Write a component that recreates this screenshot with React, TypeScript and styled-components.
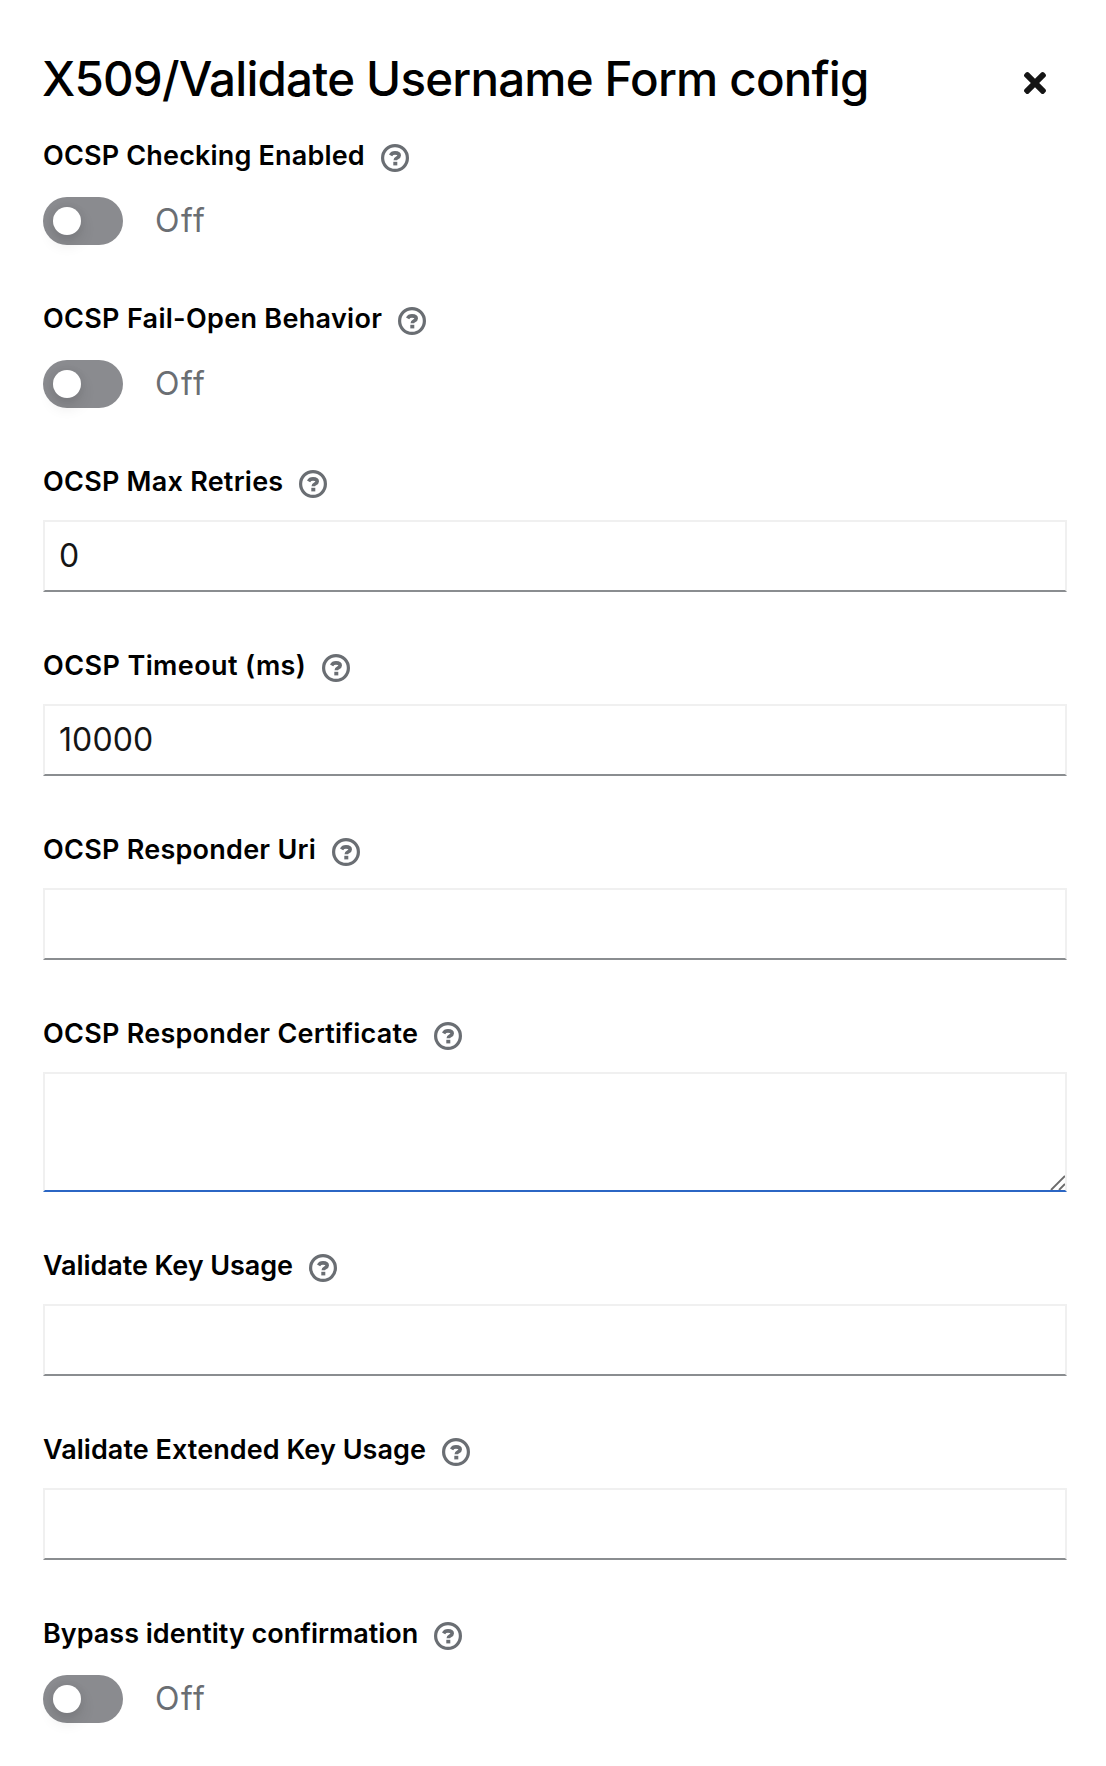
import React, { useState } from 'react';
import styled, { createGlobalStyle } from 'styled-components';
import { FaTimes } from 'react-icons/fa';

const GlobalStyle = createGlobalStyle`
  *, *::before, *::after { box-sizing: border-box; }
  body {
    margin: 0;
    background: #fff;
    color: #151515;
    font-family: Inter, "Liberation Sans", sans-serif;
  }
`;

const Modal = styled.main`
  width: 1106px;
  height: 1766px;
  overflow: hidden;
  padding: 48px 39px 0 43px;
`;

const Header = styled.header`
  display: flex;
  justify-content: space-between;
  align-items: center;
  height: 64px;
  margin-bottom: 26px;
  padding-right: 16px;
`;

const Title = styled.h1`
  margin: 0 0 2px -1px;
  color: #000;
  font-size: 47.5px;
  font-weight: 500;
  line-height: 62px;
  letter-spacing: -0.82px;
  white-space: nowrap;
`;

const CloseButton = styled.button`
  display: flex;
  align-items: center;
  justify-content: center;
  width: 32px;
  height: 32px;
  margin-top: 6px;
  padding: 0;
  border: 0;
  background: none;
  color: #151515;
  font-size: 32px;
`;

const Form = styled.form`
  display: flex;
  flex-direction: column;
  gap: 56px;
`;

const Group = styled.div<{ $gap: number }>`
  display: flex;
  flex-direction: column;
  align-items: flex-start;
  gap: ${(p) => p.$gap}px;
`;

const LabelRow = styled.div`
  display: flex;
  align-items: center;
  gap: 16px;
  height: 40px;
`;

const Label = styled.label<{ $tracking: number }>`
  color: #000;
  font-size: 27px;
  font-weight: 600;
  line-height: 36px;
  letter-spacing: ${(p) => p.$tracking}px;
  padding-bottom: 4px;
  white-space: nowrap;
`;

const HelpButton = styled.button`
  display: flex;
  padding: 0;
  border: 0;
  background: none;
  color: #6a6e73;
`;

const TextInput = styled.input`
  display: block;
  width: 100%;
  height: 72px;
  padding: 0 14px 2px;
  border: 2px solid #f0f0f0;
  border-bottom-color: #8a8d90;
  border-radius: 0;
  outline: 0;
  background: #fff;
  color: #151515;
  font: 400 32px/48px Inter, "Liberation Sans", sans-serif;
  letter-spacing: 0.1px;
`;

const TextAreaBox = styled.div`
  position: relative;
  width: 100%;
  height: 120px;
`;

const TextArea = styled.textarea`
  display: block;
  width: 100%;
  height: 100%;
  padding: 10px 14px;
  border: 2px solid #f0f0f0;
  border-bottom-color: #2b66c4;
  border-radius: 0;
  outline: 0;
  resize: none;
  background: #fff;
  color: #151515;
  font: 400 32px/48px Inter, "Liberation Sans", sans-serif;
`;

const Grip = styled.svg`
  position: absolute;
  right: 2px;
  bottom: 2px;
`;

const SwitchRow = styled.div`
  display: flex;
  align-items: center;
  gap: 32px;
  height: 48px;
`;

const Track = styled.button<{ $on: boolean }>`
  display: flex;
  align-items: center;
  justify-content: ${(p) => (p.$on ? 'flex-end' : 'flex-start')};
  width: 80px;
  height: 48px;
  padding: 0 10px;
  border: 0;
  border-radius: 24px;
  background: ${(p) => (p.$on ? '#2b66c4' : '#8a8b8f')};
`;

const Knob = styled.span`
  width: 28px;
  height: 28px;
  border-radius: 50%;
  background: #fff;
  box-shadow: 0 8px 16px rgba(3, 3, 3, 0.12), 0 0 8px rgba(3, 3, 3, 0.06);
`;

const SwitchText = styled.span`
  color: #6a6e73;
  font-size: 32px;
  font-weight: 400;
  line-height: 48px;
  letter-spacing: 1.5px;
`;

function HelpIcon() {
  return (
    <svg width="28" height="28" viewBox="0 0 28 28" fill="none" stroke="currentColor">
      <circle cx="14" cy="14" r="12.4" strokeWidth="3.2" />
      <path d="M9.6 11.3C10.5 9.6 11.9 8.9 14 8.9c2.5 0 4.2 1 4.2 2.7 0 2.3-3.9 2.1-3.9 4.7" strokeWidth="3.6" />
      <path d="M12.3 19.6h4" strokeWidth="3.6" />
    </svg>
  );
}

type Field = {
  id: string;
  label: string;
  tracking: number;
  kind: 'switch' | 'text' | 'area';
  value?: string;
};

const fields: Field[] = [
  { id: 'ocsp-checking', label: 'OCSP Checking Enabled', tracking: 0.17, kind: 'switch' },
  { id: 'ocsp-fail-open', label: 'OCSP Fail-Open Behavior', tracking: 0.3, kind: 'switch' },
  { id: 'ocsp-retries', label: 'OCSP Max Retries', tracking: 0.24, kind: 'text', value: '0' },
  { id: 'ocsp-timeout', label: 'OCSP Timeout (ms)', tracking: 0.4, kind: 'text', value: '10000' },
  { id: 'ocsp-uri', label: 'OCSP Responder Uri', tracking: 0.25, kind: 'text' },
  { id: 'ocsp-certificate', label: 'OCSP Responder Certificate', tracking: 0.25, kind: 'area' },
  { id: 'key-usage', label: 'Validate Key Usage', tracking: -0.07, kind: 'text' },
  { id: 'extended-key-usage', label: 'Validate Extended Key Usage', tracking: 0.05, kind: 'text' },
  { id: 'bypass-identity', label: 'Bypass identity confirmation', tracking: 0, kind: 'switch' },
];

function Switch({ id }: { id: string }) {
  const [on, setOn] = useState(false);
  return (
    <SwitchRow>
      <Track id={id} type="button" role="switch" aria-checked={on} $on={on} onClick={() => setOn(!on)}>
        <Knob />
      </Track>
      <SwitchText>{on ? 'On' : 'Off'}</SwitchText>
    </SwitchRow>
  );
}

function FormField({ field }: { field: Field }) {
  return (
    <Group $gap={field.kind === 'switch' ? 19 : 16}>
      <LabelRow>
        <Label htmlFor={field.id} $tracking={field.tracking}>{field.label}</Label>
        <HelpButton type="button"><HelpIcon /></HelpButton>
      </LabelRow>
      {field.kind === 'switch' && <Switch id={field.id} />}
      {field.kind === 'text' && <TextInput id={field.id} defaultValue={field.value} />}
      {field.kind === 'area' && (
        <TextAreaBox>
          <TextArea id={field.id} />
          <Grip width="15" height="15" viewBox="0 0 15 15" stroke="#6b6b6b" strokeWidth="1.9">
            <path d="M1 15 15 1M9 15l6-6" />
          </Grip>
        </TextAreaBox>
      )}
    </Group>
  );
}

export default function App() {
  return (
    <>
      <GlobalStyle />
      <Modal>
        <Header>
          <Title>X509/Validate Username Form config</Title>
          <CloseButton type="button"><FaTimes /></CloseButton>
        </Header>
        <Form>
          {fields.map((field) => <FormField key={field.id} field={field} />)}
        </Form>
      </Modal>
    </>
  );
}
